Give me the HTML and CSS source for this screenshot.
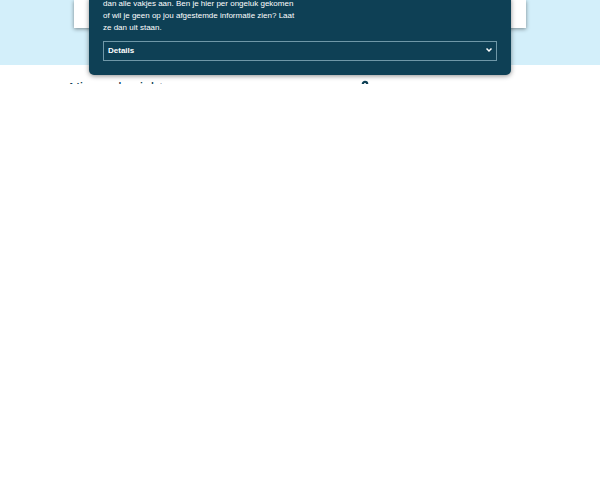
FILE: index.html
```
<!DOCTYPE html>
<html lang="nl">
<head>
<meta charset="utf-8">
<meta name="viewport" content="width=device-width, initial-scale=1">
<title>Cookies</title>
<link rel="stylesheet" href="styles.css">
</head>
<body>
<main>
  <section class="band"><div class="card"></div></section>
  <section class="news">
    <h2 class="title">Nieuwsberichten</h2>
    <svg class="mark" viewBox="0 0 8 8" aria-hidden="true"><circle cx="4" cy="4" r="2.2" fill="none" stroke="#0e4055" stroke-width="2.2"/></svg>
  </section>
</main>
<div class="dialog" role="dialog" aria-label="Cookies">
  <p class="text">dan alle vakjes aan. Ben je hier per ongeluk gekomen of wil je geen op jou afgestemde informatie zien? Laat ze dan uit staan.</p>
  <button class="details" type="button">
    <span>Details</span>
    <svg class="chevron" viewBox="0 0 6 8" aria-hidden="true"><path d="M.5 1.5 3 4 5.5 1.5" fill="none" stroke="#fff" stroke-width="1.5"/></svg>
  </button>
</div>
</body>
</html>
```
FILE: styles.css
```
* { box-sizing: border-box; }
body {
  margin: 0;
  background: #fff;
  color: #0e4055;
  font-family: "Liberation Sans", Arial, sans-serif;
}
.band {
  height: 65px;
  padding: 0 74px;
  background: #d3effa;
}
.card {
  height: 28px;
  background: #fff;
  box-shadow: 0 1px 4px rgba(0, 0, 0, .45);
}
.news {
  display: grid;
  grid-template-columns: 292px 1fr;
  align-items: start;
  height: 19px;
  padding: 14px 69px 0;
  overflow: hidden;
}
.title {
  margin: 0;
  font-size: 15px;
  font-weight: 400;
  line-height: 18px;
}
.mark {
  width: 8px;
  height: 8px;
  margin-top: 1px;
}
.dialog {
  position: absolute;
  top: -2px;
  left: 89px;
  right: 89px;
  padding: 0 14px 14px;
  border-radius: 0 0 5px 5px;
  background: #0e4055;
  color: #fff;
  box-shadow: 0 1px 5px rgba(0, 0, 0, .45);
}
.text {
  max-width: 196px;
  margin: 0 0 7px;
  font-size: 8px;
  line-height: 12px;
}
.details {
  display: flex;
  align-items: center;
  justify-content: space-between;
  width: 100%;
  height: 20px;
  padding: 0 4px;
  border: 1px solid #6f98a8;
  background: transparent;
  color: #fff;
  font: bold 8px/12px "Liberation Sans", Arial, sans-serif;
}
.chevron {
  width: 6px;
  height: 8px;
}
```
